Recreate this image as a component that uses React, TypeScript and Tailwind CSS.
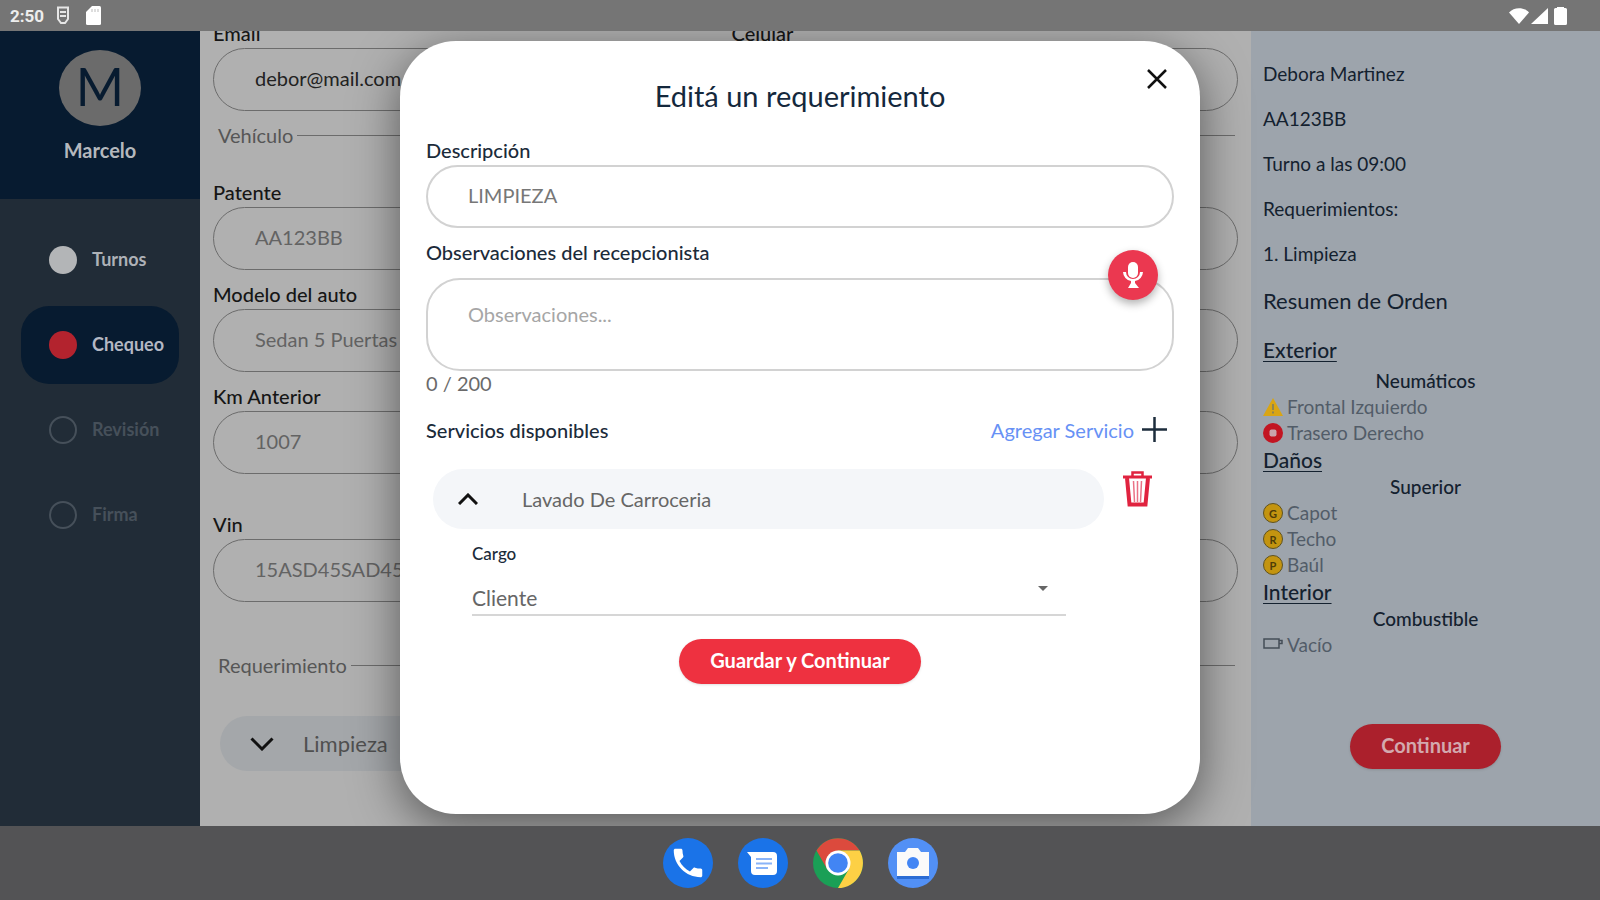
import React from "react";
import { MdArrowDropDown, MdPhone } from "react-icons/md";

type Step = { name: string; state: "done" | "active" | "pending" };

const steps: Step[] = [
  { name: "Turnos", state: "done" },
  { name: "Chequeo", state: "active" },
  { name: "Revisión", state: "pending" },
  { name: "Firma", state: "pending" },
];

const dotStyles = {
  done: "bg-[#b3b5b7]",
  active: "bg-[#b3232e]",
  pending: "border-2 border-[#46505a]",
};

const stepText = {
  done: "font-bold text-[#aeb2b7]",
  active: "font-bold text-[#b4b8c4]",
  pending: "font-bold text-[#46505a]",
};

function StatusBar() {
  return (
    <header className="flex h-[31px] shrink-0 items-center justify-between bg-[#757575] pr-[33px] pl-[10px] text-white">
      <div className="flex items-center">
        <time className="w-[46px] font-['Roboto',sans-serif] text-[17px] leading-6 font-bold text-[#ededed]">2:50</time>
        <svg className="mr-4 h-[19px] w-[14px]" viewBox="0 0 14 19" fill="none" stroke="#e6e6e6" strokeWidth="2">
          <path d="M2 1.500h10v11.500l-3 4H5l-3-4z" />
          <path d="M4 6h6M4 10h6" />
        </svg>
        <svg className="h-[19px] w-[15px]" viewBox="0 0 15 19" fill="#fff">
          <path d="M6 0h7.500A1.500 1.500 0 0 1 15 1.500v16a1.500 1.500 0 0 1-1.500 1.500h-12A1.500 1.500 0 0 1 0 17.500V6z" />
          <path d="M6 3v3M9 3v3M12 3v3" stroke="#bbb" strokeWidth="1" />
        </svg>
      </div>
      <div className="flex items-center">
        <svg className="h-4 w-5" viewBox="0 0 20 16" fill="#fff">
          <path d="M0 4.500C5-1.200 15-1.200 20 4.500L10 16z" />
        </svg>
        <svg className="ml-[2px] h-4 w-[17px]" viewBox="0 0 17 16" fill="#fff">
          <path d="M17 0v16H0z" />
        </svg>
        <svg className="ml-[6px] h-[18px] w-[13px]" viewBox="0 0 13 18" fill="#fff">
          <path d="M3 0h7v1h1.500A1.500 1.500 0 0 1 13 2.500v14a1.500 1.500 0 0 1-1.500 1.500h-10A1.500 1.500 0 0 1 0 16.500v-14A1.500 1.500 0 0 1 1.500 1H3z" />
        </svg>
      </div>
    </header>
  );
}

function Sidebar() {
  return (
    <aside className="flex flex-col bg-[#212c37]">
      <div className="flex h-[168px] flex-col items-center bg-[#071b30] pt-[19px]">
        <div className="flex h-[76px] w-[82px] items-center justify-center rounded-[50%] bg-[#6b6b6b] pb-1 text-[52px] leading-none text-[#071b30]">
          M
        </div>
        <p className="mt-3 text-[20px] leading-6 font-bold text-[#b4b8bd]">Marcelo</p>
      </div>
      <nav className="flex flex-col gap-[7px] px-[21px] pt-[22px]">
        {steps.map((step) => (
          <a
            key={step.name}
            href="#"
            className={`flex h-[78px] items-center gap-[15px] rounded-[28px] pl-7 ${step.state === "active" ? "bg-[#071b30]" : ""}`}
          >
            <span className={`size-7 shrink-0 rounded-full ${dotStyles[step.state]}`} />
            <span className={`pb-[2px] text-[18px] leading-6 ${stepText[step.state]}`}>{step.name}</span>
          </a>
        ))}
      </nav>
    </aside>
  );
}

function Field({ id, label, value, dark }: { id: string; label?: string; value?: string; dark?: boolean }) {
  return (
    <div className="flex flex-col gap-1">
      <label htmlFor={id} className="h-[22px] text-[20px] leading-[22px] font-medium text-[#161616]">
        {label}
      </label>
      <input
        id={id}
        aria-label={label ? undefined : id}
        defaultValue={value}
        className={`h-[63px] w-full rounded-full border border-[#6c6c6c] px-[41px] pb-1 text-[20px] outline-none ${dark ? "text-[#222]" : "text-[#636363]"}`}
      />
    </div>
  );
}

function SectionTitle({ children }: { children: React.ReactNode }) {
  return (
    <h2 className="flex items-center gap-1 pr-[3px] pl-[5px] text-[20px] leading-6 text-[#565656]">
      {children}
      <span className="h-px flex-1 bg-[#6c6c6c]" />
    </h2>
  );
}

function CheckForm() {
  return (
    <main className="overflow-hidden bg-[#b0b0b0] px-[13px]">
      <form className="-mt-[9px]">
        <div className="grid grid-cols-2 gap-x-3">
          <Field id="email" label="Email" value="debor@mail.com" dark />
          <Field id="celular" label="Celular" />
        </div>
        <div className="pt-3 pb-[34px]">
          <SectionTitle>Vehículo</SectionTitle>
        </div>
        <div className="grid grid-cols-2 gap-x-3 gap-y-[13px]">
          <Field id="patente" label="Patente" value="AA123BB" />
          <Field id="marca" />
          <Field id="modelo" label="Modelo del auto" value="Sedan 5 Puertas" />
          <Field id="color" />
          <Field id="km-anterior" label="Km Anterior" value="1007" />
          <Field id="km-actual" />
        </div>
        <div className="mt-[39px] grid grid-cols-2 gap-x-3">
          <Field id="vin" label="Vin" value="15ASD45SAD45" />
          <Field id="motor" />
        </div>
        <div className="pt-[51px] pb-[39px]">
          <SectionTitle>Requerimiento</SectionTitle>
        </div>
        <button type="button" className="ml-[7px] flex h-[55px] w-4/5 items-center gap-[29px] rounded-full bg-[#a4a7aa] pl-[30px] text-[22px] text-[#505050]">
          <svg className="h-[14px] w-[24px]" viewBox="0 0 24 14" fill="none" stroke="#111" strokeWidth="3">
            <path d="M1.500 1.500L12 12 22.500 1.500" />
          </svg>
          Limpieza
        </button>
      </form>
    </main>
  );
}

function PanelHeading({ children }: { children: React.ReactNode }) {
  return <h3 className="text-[21px] leading-7 font-medium text-[#14212f] underline decoration-1 underline-offset-3">{children}</h3>;
}

function PanelGroup({ children }: { children: React.ReactNode }) {
  return <h4 className="text-center text-[19px] leading-[26px] font-medium text-[#14212f]">{children}</h4>;
}

function PanelItem({ icon, children }: { icon: React.ReactNode; children: React.ReactNode }) {
  return (
    <li className="flex h-[26px] items-center gap-1 text-[19px] leading-[26px] text-[#525c68]">
      <span className="flex w-5 shrink-0 justify-center">{icon}</span>
      {children}
    </li>
  );
}

function Damage({ letter }: { letter: string }) {
  return (
    <span className="flex size-5 items-center justify-center rounded-full border border-[#5f5220] bg-[#c39410] text-[11px] leading-none font-bold text-[#4d3c08]">
      {letter}
    </span>
  );
}

function Summary() {
  return (
    <aside className="flex flex-col bg-[#9da4ac] px-3 pt-[31px] text-[#14212f]">
      <div className="flex flex-col gap-[21px] text-[19px] leading-6">
        <p>Debora Martinez</p>
        <p>AA123BB</p>
        <p>Turno a las 09:00</p>
        <p>Requerimientos:</p>
        <p>1. Limpieza</p>
      </div>
      <h2 className="mt-5 mb-5 text-[22px] leading-[30px]">Resumen de Orden</h2>
      <PanelHeading>Exterior</PanelHeading>
      <div className="pt-1">
        <PanelGroup>Neumáticos</PanelGroup>
        <ul>
          <PanelItem
            icon={
              <svg className="h-[18px] w-5" viewBox="0 0 20 18">
                <path d="M10 0L20 18H0z" fill="#d9a514" />
                <path d="M10 6v6M10 13.500v2" stroke="#8f8552" strokeWidth="2" />
              </svg>
            }
          >
            Frontal Izquierdo
          </PanelItem>
          <PanelItem
            icon={
              <svg className="size-5" viewBox="0 0 20 20">
                <circle cx="10" cy="10" r="10" fill="#c21522" />
                <rect x="6.500" y="6.500" width="7" height="7" rx="2" fill="#c9a4ac" />
              </svg>
            }
          >
            Trasero Derecho
          </PanelItem>
        </ul>
      </div>
      <PanelHeading>Daños</PanelHeading>
      <PanelGroup>Superior</PanelGroup>
      <ul>
        <PanelItem icon={<Damage letter="G" />}>Capot</PanelItem>
        <PanelItem icon={<Damage letter="R" />}>Techo</PanelItem>
        <PanelItem icon={<Damage letter="P" />}>Baúl</PanelItem>
      </ul>
      <PanelHeading>Interior</PanelHeading>
      <PanelGroup>Combustible</PanelGroup>
      <ul>
        <PanelItem
          icon={
            <svg className="mb-1 h-[11px] w-5" viewBox="0 0 20 11" fill="none" stroke="#444d57" strokeWidth="1.500">
              <path d="M1 1h15v9H1zM16 2.500h3v3h-3" />
            </svg>
          }
        >
          Vacío
        </PanelItem>
      </ul>
      <button
        type="button"
        className="mt-[66px] h-[45px] self-center rounded-full bg-[#ab202c] px-[31px] pb-1 text-[20px] font-bold text-[#d3a9ae] shadow"
      >
        Continuar
      </button>
    </aside>
  );
}

function EditDialog() {
  return (
    <section
      role="dialog"
      aria-labelledby="dialog-title"
      className="relative mt-[10px] mb-3 w-1/2 rounded-[56px] bg-white px-[26px] pt-[39px] text-[20px] leading-6 text-[#1b2b3a] shadow-[0_12px_48px_rgba(0,0,0,0.500)]"
    >
      <h1 id="dialog-title" className="text-center text-[29px] leading-8 text-[#14283c]">
        Editá un requerimiento
      </h1>
      <button type="button" aria-label="Cerrar" className="absolute top-7 right-[33px]">
        <svg className="size-5" viewBox="0 0 20 20" stroke="#111" strokeWidth="2.500">
          <path d="M1 1l18 18M19 1L1 19" />
        </svg>
      </button>

      <div className="mt-[26px] flex flex-col gap-[3px]">
        <label htmlFor="descripcion" className="font-medium">Descripción</label>
        <input
          id="descripcion"
          defaultValue="LIMPIEZA"
          className="h-[63px] w-full rounded-full border-2 border-[#d2d2d2] px-10 pb-[3px] text-[#777] outline-none"
        />
      </div>

      <div className="relative mt-3 flex flex-col gap-[14px]">
        <label htmlFor="observaciones" className="font-medium">Observaciones del recepcionista</label>
        <textarea
          id="observaciones"
          placeholder="Observaciones..."
          className="h-[93px] w-full resize-none rounded-[34px] border-2 border-[#d2d2d2] px-10 py-[22px] outline-none placeholder:text-[#a6a6a6]"
        />
        <button
          type="button"
          aria-label="Dictar observaciones"
          className="absolute top-[10px] right-4 flex size-[50px] items-center justify-center rounded-full bg-[#eb3850] text-white shadow-[0_4px_8px_rgba(0,0,0,0.300)]"
        >
          <svg className="h-[26px] w-5" viewBox="0 0 20 26" fill="#fff">
            <rect x="5" y="0" width="10" height="16" rx="5" />
            <path d="M0 10h3a7 7 0 0 0 14 0h3a9.500 9.500 0 0 1-8 9v2l4 5H5l3-5v-2a9.500 9.500 0 0 1-8-9z" />
          </svg>
        </button>
      </div>
      <p className="text-[#6a6a6a]">0 / 200</p>

      <div className="mt-[22px] flex items-center justify-between pr-[7px]">
        <h2 className="font-medium">Servicios disponibles</h2>
        <button type="button" className="flex items-center gap-2 text-[#6791f5]">
          Agregar Servicio
          <svg className="size-[25px]" viewBox="0 0 25 25" stroke="#1d2d3c" strokeWidth="2.500">
            <path d="M12.500 0v25M0 12.500h25" />
          </svg>
        </button>
      </div>

      <div className="mt-[27px] flex items-start gap-[19px] pr-[22px] pl-[7px]">
        <button type="button" className="flex h-[60px] flex-1 items-center gap-11 rounded-full bg-[#f4f6f9] pl-[25px] text-[#666]">
          <svg className="h-3 w-5" viewBox="0 0 20 12" fill="none" stroke="#111" strokeWidth="3">
            <path d="M1 11l9-9 9 9" />
          </svg>
          Lavado De Carroceria
        </button>
        <button type="button" aria-label="Eliminar servicio" className="mt-[2px]">
          <svg className="h-9 w-[29px]" viewBox="0 0 29 36" fill="none" stroke="#e0233f">
            <path d="M9.500 5V1.500h10V5" strokeWidth="2.500" />
            <path d="M0 6h29" strokeWidth="3" />
            <path d="M4 7L6.500 33.500h16L25 7" strokeWidth="4" />
            <path d="M10.500 10l1 21M14.500 10v21M18.500 10l-1 21" stroke="#ea7286" strokeWidth="1.500" />
          </svg>
        </button>
      </div>

      <div className="mr-[108px] ml-[46px] flex flex-col pt-[13px]">
        <label htmlFor="cargo" className="text-[17px] leading-6 font-medium">Cargo</label>
        <div className="relative">
          <select id="cargo" className="h-[50px] w-full appearance-none border-b-2 border-[#d6d6d6] bg-transparent pt-4 text-[21px] leading-7 text-[#666] outline-none">
            <option>Cliente</option>
          </select>
          <MdArrowDropDown className="pointer-events-none absolute top-[10px] right-[11px] size-6 text-[#666]" />
        </div>
      </div>

      <div className="mt-[23px] flex justify-center">
        <button type="button" className="h-[45px] rounded-full bg-[#ee3140] px-[31px] pb-1 text-[20px] font-bold text-white shadow">
          Guardar y Continuar
        </button>
      </div>
    </section>
  );
}

function Dock() {
  return (
    <footer className="flex h-[74px] shrink-0 items-center justify-center gap-[25px] bg-[#535355]">
      <button type="button" aria-label="Teléfono" className="flex size-[50px] items-center justify-center rounded-full bg-[#1a73e8]">
        <MdPhone className="size-[38px] text-white" />
      </button>
      <button type="button" aria-label="Mensajes">
        <svg className="size-[50px]" viewBox="0 0 50 50">
          <circle cx="25" cy="25" r="25" fill="#1a73e8" />
          <path d="M9 14h26a4 4 0 0 1 4 4v15a4 4 0 0 1-4 4H17a4 4 0 0 1-4-4V19z" fill="#fff" />
          <path d="M18 21h16M18 25.500h16M18 30h12" stroke="#8ab4f8" strokeWidth="2.200" />
        </svg>
      </button>
      <button type="button" aria-label="Chrome">
        <svg className="size-[50px]" viewBox="0 0 50 50">
          <circle cx="25" cy="25" r="25" fill="#1a9f56" />
          <path d="M3.500 12.500A25 25 0 0 1 46.600 12.500H25L14.200 31.200z" fill="#dc4a3d" />
          <path d="M46.600 12.500A25 25 0 0 1 25 50l10.800-18.800L25 12.500z" fill="#fdd045" />
          <circle cx="25" cy="25" r="12.500" fill="#fff" />
          <circle cx="25" cy="25" r="9.800" fill="#4285f4" />
        </svg>
      </button>
      <button type="button" aria-label="Cámara">
        <svg className="size-[50px]" viewBox="0 0 50 50">
          <circle cx="25" cy="25" r="25" fill="#5290f5" />
          <path d="M9 38h32v3H9z" fill="#2b6cd4" />
          <path d="M9 14h8l3-4h10l3 4h8v24H9z" fill="#fafafa" />
          <circle cx="25" cy="25" r="6" fill="#4285f4" />
        </svg>
      </button>
    </footer>
  );
}

export default function App() {
  return (
    <div className="flex min-h-screen flex-col font-['Lato','Open_Sans',sans-serif]">
      <StatusBar />
      <div className="relative grid flex-1 grid-cols-[200px_1fr_349px]">
        <Sidebar />
        <CheckForm />
        <Summary />
        <div className="absolute inset-0 flex justify-center overflow-hidden">
          <EditDialog />
        </div>
      </div>
      <Dock />
    </div>
  );
}
